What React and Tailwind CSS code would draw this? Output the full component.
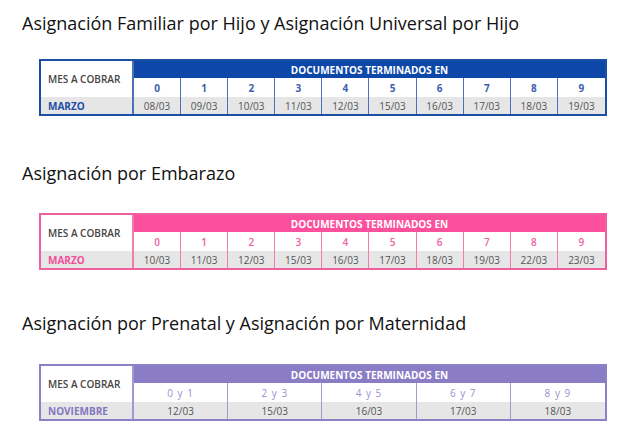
const sections = [
  {
    title: "Asignación Familiar por Hijo y Asignación Universal por Hijo",
    month: "MARZO",
    border: "border-[#1a4fa3]",
    head: "bg-[#0d47a8]",
    num: "text-[#3a5fae] font-bold",
    monthText: "text-[#1d4ea6]",
    line: "border-[#4a72b8]",
    cols: "grid-cols-[93px_repeat(10,1fr)]",
    span: "col-span-10",
    titleGap: "mt-[11px]",
    tableGap: "mt-[24px]",
    cells: [
      ["0", "08/03"], ["1", "09/03"], ["2", "10/03"], ["3", "11/03"], ["4", "12/03"],
      ["5", "15/03"], ["6", "16/03"], ["7", "17/03"], ["8", "18/03"], ["9", "19/03"],
    ],
  },
  {
    title: "Asignación por Embarazo",
    month: "MARZO",
    border: "border-[#f0609f]",
    head: "bg-[#fc4f9c]",
    num: "text-[#f0609f] font-semibold",
    monthText: "text-[#f24f9a]",
    line: "border-[#f27cb0]",
    cols: "grid-cols-[93px_repeat(10,1fr)]",
    span: "col-span-10",
    titleGap: "mt-[45px]",
    tableGap: "mt-[28px]",
    cells: [
      ["0", "10/03"], ["1", "11/03"], ["2", "12/03"], ["3", "15/03"], ["4", "16/03"],
      ["5", "17/03"], ["6", "18/03"], ["7", "19/03"], ["8", "22/03"], ["9", "23/03"],
    ],
  },
  {
    title: "Asignación por Prenatal y Asignación por Maternidad",
    month: "NOVIEMBRE",
    border: "border-[#8c80c6]",
    head: "bg-[#8a7dc6]",
    num: "text-[#9a90cf] font-normal tracking-[1px]",
    monthText: "text-[#8376c2]",
    line: "border-[#a198d3]",
    cols: "grid-cols-[93px_repeat(5,1fr)]",
    span: "col-span-5",
    titleGap: "mt-[41px]",
    tableGap: "mt-[29px]",
    cells: [
      ["0 y 1", "12/03"], ["2 y 3", "15/03"], ["4 y 5", "16/03"], ["6 y 7", "17/03"], ["8 y 9", "18/03"],
    ],
  },
];

function Table({ s }) {
  return (
    <div className={`ml-[17px] w-[568px] border-2 ${s.border} bg-white`}>
      <div className={`grid ${s.cols} grid-rows-[17px_19px_17px] text-[10px] leading-none`}>
        <div className={`row-span-2 flex items-center pl-[7px] border-r-2 ${s.line} text-[#444] font-semibold`}>
          MES A COBRAR
        </div>
        <div className={`${s.span} ${s.head} flex items-center justify-center text-white font-bold`}>
          DOCUMENTOS TERMINADOS EN
        </div>
        {s.cells.map(([n], i) => (
          <div
            key={"n" + i}
            className={`flex items-center justify-center ${s.num} ${i < s.cells.length - 1 ? `border-r ${s.line}` : ""}`}
          >
            {n}
          </div>
        ))}
        <div className={`flex items-center pl-[7px] bg-[#e6e6e6] border-r-2 ${s.line} ${s.monthText} font-bold`}>
          {s.month}
        </div>
        {s.cells.map(([, d], i) => (
          <div
            key={"d" + i}
            className={`flex items-center justify-center bg-[#e6e6e6] text-[#555] ${i < s.cells.length - 1 ? `border-r ${s.line}` : ""}`}
          >
            {d}
          </div>
        ))}
      </div>
    </div>
  );
}

export default function App() {
  return (
    <div className="w-[640px] h-[442px] bg-white pl-[22px] font-['Open_Sans',sans-serif] overflow-hidden">
      {sections.map((s, i) => (
        <div key={i} className={s.titleGap}>
          <h2 className="text-[18px] leading-[24px] text-[#111] font-medium">{s.title}</h2>
          <div className={s.tableGap}>
            <Table s={s} />
          </div>
        </div>
      ))}
    </div>
  );
}
